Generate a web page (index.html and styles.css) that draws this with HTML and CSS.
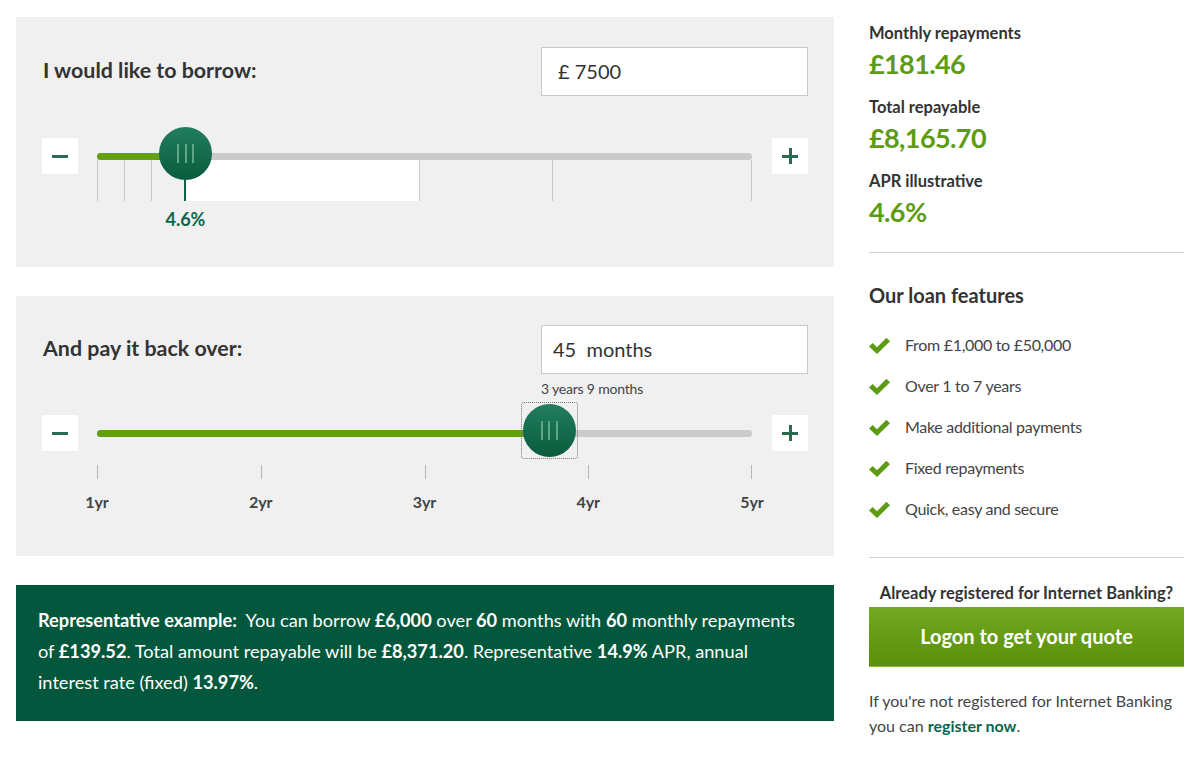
FILE: index.html
```html
<!DOCTYPE html>
<html lang="en">
<head>
<meta charset="utf-8">
<title>Loan calculator</title>
<link rel="stylesheet" href="styles.css">
</head>
<body>
<div class="page">
  <div class="main">
    <section class="panel panel-amount">
      <div class="panel-head">
        <h2 class="panel-title">I would like to borrow:</h2>
        <div class="field">£ 7500</div>
      </div>
      <div class="slider">
        <button class="step" aria-label="Decrease"><span class="minus-glyph"></span></button>
        <div class="track-area">
          <div class="track"><div class="fill" style="width:13.5%"></div></div>
          <div class="bands">
            <span class="band" style="left:13.5%;width:35.7%"></span>
            <span class="band-tick" style="left:0%"></span>
            <span class="band-tick" style="left:4.1%"></span>
            <span class="band-tick" style="left:8.2%"></span>
            <span class="band-tick" style="left:49.2%"></span>
            <span class="band-tick" style="left:69.5%"></span>
            <span class="band-tick" style="left:calc(100% - 1px)"></span>
            <span class="band-marker" style="left:13.5%"></span>
          </div>
          <div class="rate-row"><span class="rate" style="left:13.5%">4.6%</span></div>
          <div class="thumb" style="left:13.5%"><i></i><i></i><i></i></div>
        </div>
        <button class="step" aria-label="Increase"><span class="plus-glyph"></span></button>
      </div>
    </section>

    <section class="panel panel-term">
      <div class="panel-head">
        <h2 class="panel-title">And pay it back over:</h2>
        <div class="field-col">
          <div class="field field-term">45&nbsp; months</div>
          <div class="field-note">3 years 9 months</div>
        </div>
      </div>
      <div class="slider slider-term">
        <button class="step" aria-label="Decrease"><span class="minus-glyph"></span></button>
        <div class="track-area">
          <div class="track"><div class="fill" style="width:69%"></div></div>
          <div class="ticks">
            <span class="tick" style="left:0%"></span>
            <span class="tick" style="left:25%"></span>
            <span class="tick" style="left:50%"></span>
            <span class="tick" style="left:75%"></span>
            <span class="tick" style="left:calc(100% - 1px)"></span>
          </div>
          <div class="tick-labels">
            <span class="tick-label" style="left:0%">1yr</span>
            <span class="tick-label" style="left:25%">2yr</span>
            <span class="tick-label" style="left:50%">3yr</span>
            <span class="tick-label" style="left:75%">4yr</span>
            <span class="tick-label" style="left:100%">5yr</span>
          </div>
          <div class="thumb thumb-focus" style="left:69%"><i></i><i></i><i></i></div>
        </div>
        <button class="step" aria-label="Increase"><span class="plus-glyph"></span></button>
      </div>
    </section>

    <div class="example">
      <p class="example-text"><b>Representative example:</b>&nbsp; You can borrow <b>£6,000</b> over <b>60</b> months with <b>60</b> monthly repayments of <b>£139.52</b>. Total amount repayable will be <b>£8,371.20</b>. Representative <b>14.9%</b> APR, annual interest rate (fixed) <b>13.97%</b>.</p>
    </div>
  </div>

  <aside class="side">
    <div class="stat">
      <div class="stat-label">Monthly repayments</div>
      <div class="stat-value">£181.46</div>
    </div>
    <div class="stat">
      <div class="stat-label">Total repayable</div>
      <div class="stat-value">£8,165.70</div>
    </div>
    <div class="stat">
      <div class="stat-label">APR illustrative</div>
      <div class="stat-value">4.6%</div>
    </div>
    <hr class="rule rule-top">
    <h3 class="features-title">Our loan features</h3>
    <ul class="features">
      <li><svg class="check" viewBox="0 0 21 17" aria-hidden="true"><path d="M0 9.5 L3.6 6 L8 10.2 L17.4 0.8 L21 4.3 L8 17 Z"/></svg>From £1,000 to £50,000</li>
      <li><svg class="check" viewBox="0 0 21 17" aria-hidden="true"><path d="M0 9.5 L3.6 6 L8 10.2 L17.4 0.8 L21 4.3 L8 17 Z"/></svg>Over 1 to 7 years</li>
      <li><svg class="check" viewBox="0 0 21 17" aria-hidden="true"><path d="M0 9.5 L3.6 6 L8 10.2 L17.4 0.8 L21 4.3 L8 17 Z"/></svg>Make additional payments</li>
      <li><svg class="check" viewBox="0 0 21 17" aria-hidden="true"><path d="M0 9.5 L3.6 6 L8 10.2 L17.4 0.8 L21 4.3 L8 17 Z"/></svg>Fixed repayments</li>
      <li><svg class="check" viewBox="0 0 21 17" aria-hidden="true"><path d="M0 9.5 L3.6 6 L8 10.2 L17.4 0.8 L21 4.3 L8 17 Z"/></svg>Quick, easy and secure</li>
    </ul>
    <hr class="rule rule-bottom">
    <p class="logon-q">Already registered for Internet Banking?</p>
    <a class="logon-btn" href="#">Logon to get your quote</a>
    <p class="register">If you're not registered for Internet Banking you can <a href="#">register now</a>.</p>
  </aside>
</div>
</body>
</html>
```

FILE: styles.css
```css
* { box-sizing: border-box; }

body {
  margin: 0;
  background: #fff;
  color: #333;
  font-family: Lato, "Open Sans", "Liberation Sans", sans-serif;
}

.page {
  display: grid;
  grid-template-columns: 818px 315px;
  column-gap: 35px;
  padding: 17px 16px;
}

.main {
  display: flex;
  flex-direction: column;
  gap: 29px;
}

/* ---------- panels ---------- */
.panel {
  background: #f0f0f0;
  padding: 30px 26px 37px 26px;
}
.panel-term { padding-top: 29px; padding-bottom: 44px; }

.panel-head {
  display: flex;
  justify-content: space-between;
  align-items: flex-start;
}

.panel-title {
  margin: 0;
  padding-left: 1px;
  font-size: 21.4px;
  font-weight: 700;
  line-height: 47px;
  color: #333;
}

.field {
  width: 267px;
  height: 49px;
  background: #fff;
  border: 1px solid #c9c9c9;
  padding-left: 16px;
  font-size: 20px;
  line-height: 47px;
  color: #333;
}
.field-term { padding-left: 11px; }

.field-note {
  margin-top: 6px;
  font-size: 14px;
  line-height: 18px;
  color: #444;
  letter-spacing: -0.2px;
}

/* ---------- sliders ---------- */
.slider {
  display: flex;
  align-items: flex-start;
  margin-top: 42px;
}
.slider-term { margin-top: 17px; }

.step {
  flex: none;
  width: 36px;
  height: 36px;
  padding: 0;
  border: 0;
  background: #fff;
  display: flex;
  align-items: center;
  justify-content: center;
  cursor: pointer;
}

.minus-glyph {
  display: block;
  width: 16px;
  height: 3px;
  background: #2a6a51;
}
.plus-glyph {
  position: relative;
  display: block;
  width: 16px;
  height: 16px;
}
.plus-glyph::before,
.plus-glyph::after {
  content: "";
  position: absolute;
  background: #2a6a51;
}
.plus-glyph::before { left: 0; right: 0; top: 6.5px; height: 3px; }
.plus-glyph::after { top: 0; bottom: 0; left: 6.5px; width: 3px; }

.track-area {
  position: relative;
  flex: 1;
  margin: 0 20px 0 19px;
  padding-top: 15px;
}

.track {
  position: relative;
  height: 7px;
  background: #cbcbcb;
  border-radius: 4px;
}
.fill {
  position: absolute;
  left: 0; top: 0; bottom: 0;
  background: #64a00c;
  border-radius: 4px 0 0 4px;
}

.thumb {
  position: absolute;
  top: -11px;
  width: 53px;
  height: 53px;
  margin-left: -26px;
  border-radius: 50%;
  background: linear-gradient(#217d5e, #0a5b3d);
  display: flex;
  align-items: center;
  justify-content: center;
  gap: 5.5px;
}
.thumb i {
  display: block;
  width: 2px;
  height: 19px;
  background: #5fa688;
}
.thumb-focus::before {
  content: "";
  position: absolute;
  inset: -2px;
  border: 1px dotted #777;
  border-radius: 3px;
}

/* amount bands */
.bands {
  position: relative;
  height: 41px;
}
.band {
  position: absolute;
  top: 0; bottom: 0;
  background: #fff;
}
.band-tick {
  position: absolute;
  top: 0; bottom: 0;
  width: 1px;
  background: #c8c8c8;
}
.band-marker {
  position: absolute;
  top: 0; bottom: 0;
  width: 2px;
  margin-left: -1px;
  background: #0b6647;
}
.rate-row {
  position: relative;
  height: 22px;
  margin-top: 7px;
}
.rate {
  position: absolute;
  top: 0;
  transform: translateX(-50%);
  font-size: 18px;
  font-weight: 700;
  line-height: 22px;
  color: #0b6647;
}

/* term ticks */
.ticks {
  position: relative;
  height: 14px;
  margin-top: 28px;
}
.tick {
  position: absolute;
  top: 0; bottom: 0;
  width: 1px;
  background: #b5b5b5;
}
.tick-labels {
  position: relative;
  height: 20px;
  margin-top: 13px;
}
.tick-label {
  position: absolute;
  top: 0;
  transform: translateX(-50%);
  font-size: 16px;
  font-weight: 700;
  line-height: 20px;
  color: #444;
}

/* ---------- example ---------- */
.example {
  background: #02573c;
  color: #fff;
  padding: 20px 22px 23px;
}
.example-text {
  margin: 0;
  font-size: 18.2px;
  line-height: 31px;
}
.example-text b { font-weight: 700; }

/* ---------- side ---------- */
.side {
  padding-top: 6px;
}
.stat + .stat { margin-top: 16px; }
.stat-label {
  font-size: 16.5px;
  font-weight: 700;
  line-height: 20px;
  color: #333;
}
.stat-value {
  margin-top: 4px;
  font-size: 27px;
  font-weight: 700;
  line-height: 34px;
  letter-spacing: -0.6px;
  color: #5c9b12;
}

.rule {
  border: 0;
  height: 1px;
  background: #cfcfcf;
  margin: 0;
}
.rule-top { margin-top: 23px; }

.features-title {
  margin: 30px 0 0;
  font-size: 20px;
  font-weight: 700;
  line-height: 24px;
  color: #333;
}

.features {
  list-style: none;
  margin: 26px 0 0;
  padding: 0;
  display: flex;
  flex-direction: column;
  gap: 17px;
}
.features li {
  display: flex;
  align-items: center;
  font-size: 16px;
  line-height: 24px;
  letter-spacing: -0.3px;
  color: #444;
}
.check {
  flex: none;
  width: 21px;
  height: 17px;
  margin-right: 15px;
  fill: #5c9b12;
}

.rule-bottom { margin-top: 36px; }

.logon-q {
  margin: 25px 0 0;
  text-align: center;
  font-size: 16.5px;
  font-weight: 700;
  line-height: 20px;
  color: #333;
}

.logon-btn {
  display: flex;
  align-items: center;
  justify-content: center;
  margin-top: 4px;
  height: 60px;
  padding-bottom: 2px;
  background: linear-gradient(#72a822, #5b8f0b);
  border-bottom: 1px solid #86bd34;
  color: #fff;
  font-size: 20px;
  font-weight: 700;
  text-decoration: none;
}

.register {
  margin: 21px 0 0;
  font-size: 16px;
  line-height: 25px;
  color: #444;
}
.register a {
  color: #0b6647;
  font-weight: 700;
  text-decoration: none;
}
```
